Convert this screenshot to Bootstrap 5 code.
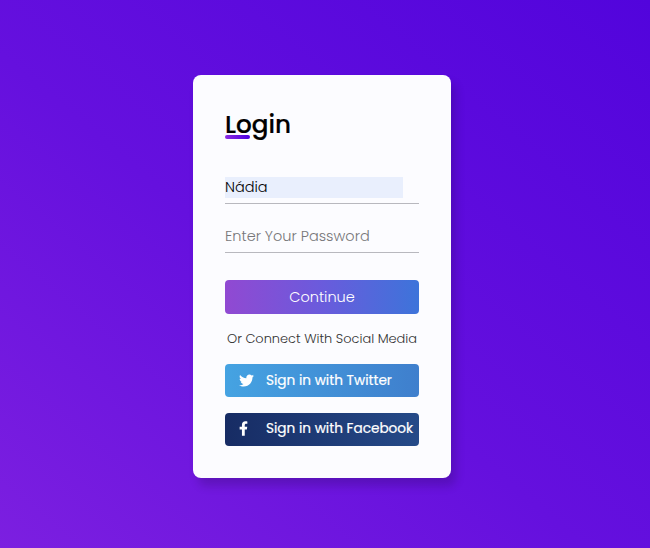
<!DOCTYPE html>
<html lang="en">
<head>
<meta charset="utf-8">
<meta name="viewport" content="width=device-width, initial-scale=1">
<title>Login</title>
<link href="https://cdn.jsdelivr.net/npm/bootstrap@5.3.0/dist/css/bootstrap.min.css" rel="stylesheet">
<style>
body{font-family:Poppins,Inter,"Open Sans",sans-serif;height:548px;overflow:hidden;background:linear-gradient(to top right,#7c1fe0,#6510de 45%,#5204dc)}
.login-card{width:258px;height:403px;margin:75px 0 0 193px;padding:32px;border:0;border-radius:8px;background:#fcfcff;box-shadow:5px 8px 10px rgba(0,0,0,.16)}
.login-card>*{flex-shrink:0}
.login-title{font-size:24.7px;line-height:34px;font-weight:500;color:#000;margin:1px 0 0;-webkit-text-stroke:.2px #000}
.title-bar{left:0;top:28px;width:25px;height:4px;border-radius:4px;background:linear-gradient(to right,#8e2de2,#4a00e0)}
.field{height:37px;padding-top:10px;border-bottom:1px solid #b8b8be}
.field input{font-size:14.5px;line-height:21px;height:21px;width:178px;color:#111;border:0;border-radius:0;padding:0;outline:0;background:transparent;font-weight:300}
.field input.filled{background:#e9effd;color:#000}
.field input::placeholder{color:#77777a;opacity:1}
.field-user{margin-top:25px}
.field-pass{margin-top:12px}
.action{font-size:14.5px;line-height:20px;color:#fff;border:0;border-radius:4px;padding:0}
.action:hover{color:#fff}
.go{height:34px;margin-top:27px;font-weight:300;background:linear-gradient(to right,#9149d2,#6a5bdc 50%,#3d74da)}
.social-note{font-size:12.95px;line-height:20px;margin:15px -4px 15px;font-weight:300;color:#333;white-space:nowrap}
.social{height:33px;font-size:13.65px;font-weight:400;padding-left:14px;white-space:nowrap;-webkit-text-stroke:.2px #fff}
.social svg{width:15px;height:15px;margin-right:12px;flex:none}
.social svg.fb{width:9px;margin-right:18px}
.twitter{background:linear-gradient(to right,#45a3e2,#3f7fcd)}
.facebook{margin-top:16px;padding-bottom:2px;background:linear-gradient(to right,#172c64,#254a88)}
</style>
</head>
<body class="d-flex align-items-start">
<form class="card login-card">
  <div class="position-relative">
    <h1 class="login-title">Login</h1>
    <div class="title-bar position-absolute"></div>
  </div>
  <div class="field field-user d-flex align-items-start"><input class="filled" type="text" value="Nádia" aria-label="User name"></div>
  <div class="field field-pass d-flex align-items-start"><input type="text" placeholder="Enter Your Password" aria-label="Password"></div>
  <button type="button" class="btn action go w-100">Continue</button>
  <p class="social-note text-center">Or Connect With Social Media</p>
  <a class="btn action social twitter d-flex align-items-center justify-content-start" href="#"><svg viewBox="0 0 512 512" fill="#fff"><path d="M459 152c.3 4.500.3 9.100.3 13.600C459.300 304.400 353.700 464.400 160.700 464.400 101.200 464.400 45.900 447.200 0 417.300c8.400 1 16.600 1.300 25.300 1.300 49 0 94.200-16.600 130.300-44.800-46.100-1-84.800-31.200-98.100-72.800 6.500 1 13 1.600 19.800 1.600 9.400 0 18.800-1.300 27.600-3.600-48.100-9.700-84.100-52-84.100-103v-1.300c14 7.800 30.200 12.700 47.400 13.300-28.300-18.800-46.800-51-46.800-87.400 0-19.500 5.200-37.400 14.300-53 51.700 63.700 129.300 105.300 216.400 109.800-1.600-7.800-2.600-15.900-2.600-24C249.500 95.100 296.300 48 354.400 48c30.200 0 57.500 12.700 76.700 33.100 23.700-4.500 46.500-13.300 66.600-25.300-7.800 24.400-24.400 44.800-46.100 57.800 21.100-2.300 41.600-8.100 60.400-16.200-14.300 20.800-32.200 39.300-52.600 54.300z"/></svg><span>Sign in with Twitter</span></a>
  <a class="btn action social facebook d-flex align-items-center justify-content-start" href="#"><svg class="fb" viewBox="0 0 320 512" fill="#fff"><path d="M279 288l14.200-92.700h-88.900v-60.100c0-25.400 12.400-50.100 52.200-50.100h40.400V6.300S260.400 0 225.400 0C152.200 0 104.400 44.400 104.400 124.700v70.600H23V288h81.400v224h100.200V288z"/></svg><span>Sign in with Facebook</span></a>
</form>
<script src="https://cdn.jsdelivr.net/npm/bootstrap@5.3.0/dist/js/bootstrap.bundle.min.js"></script>
</body>
</html>
